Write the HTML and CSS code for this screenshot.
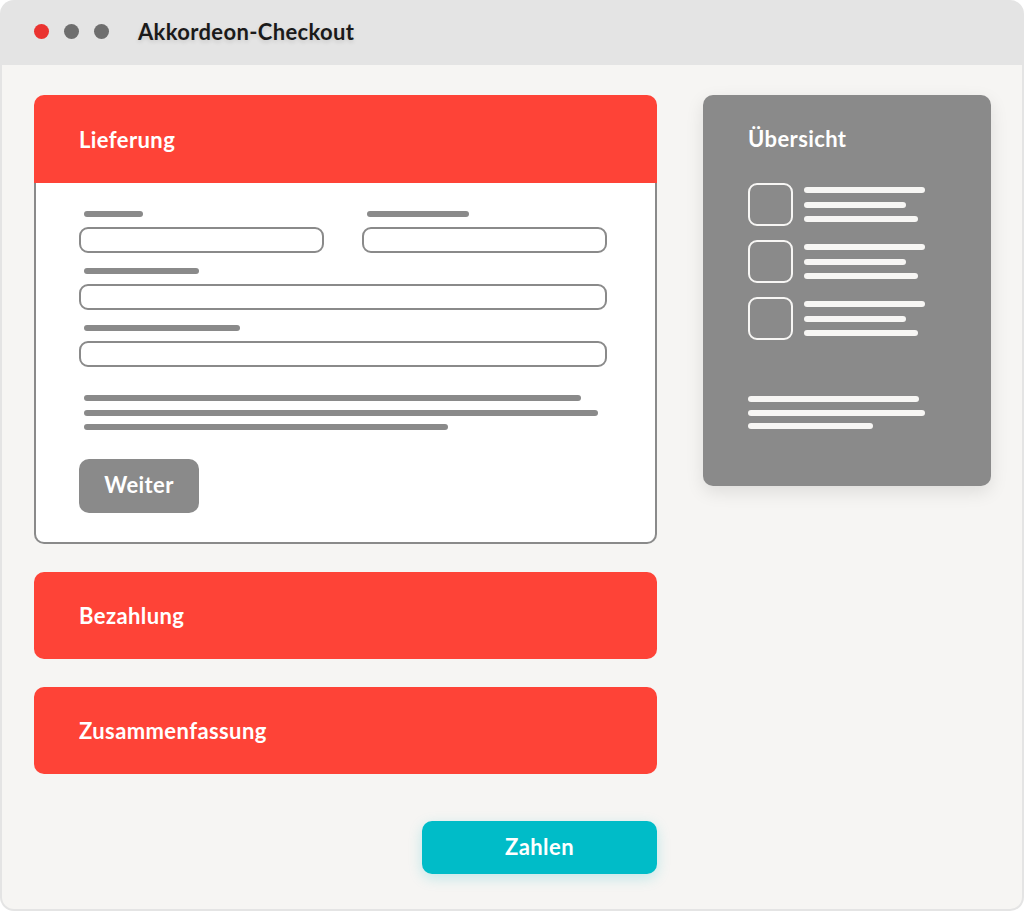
FILE: index.html
```html
<!DOCTYPE html>
<html lang="de">
<head>
<meta charset="utf-8">
<title>Akkordeon-Checkout</title>
<link rel="stylesheet" href="styles.css">
</head>
<body>
<div class="window">
  <header class="titlebar">
    <span class="dot dot-red"></span>
    <span class="dot"></span>
    <span class="dot"></span>
    <h1 class="title">Akkordeon-Checkout</h1>
  </header>
  <main class="content">
    <section class="main-col">
      <div class="acc acc-open">
        <div class="acc-head">Lieferung</div>
        <div class="acc-body">
          <div class="form">
            <div class="field"><span class="label" style="width:59px"></span><span class="input"></span></div>
            <div class="field"><span class="label" style="width:102px"></span><span class="input"></span></div>
            <div class="field span2"><span class="label" style="width:115px"></span><span class="input"></span></div>
            <div class="field span2"><span class="label" style="width:156px"></span><span class="input"></span></div>
          </div>
          <div class="text-lines">
            <span class="line" style="width:497px"></span>
            <span class="line" style="width:514px"></span>
            <span class="line" style="width:364px"></span>
          </div>
          <button class="btn-next">Weiter</button>
        </div>
      </div>
      <div class="acc acc-closed"><div class="acc-head">Bezahlung</div></div>
      <div class="acc acc-closed"><div class="acc-head">Zusammenfassung</div></div>
      <div class="pay-row"><button class="btn-pay">Zahlen</button></div>
    </section>
    <aside class="summary">
      <h2 class="summary-title">Übersicht</h2>
      <ul class="items">
        <li class="item"><span class="box"></span><span class="item-lines"><span class="wline" style="width:121px"></span><span class="wline" style="width:102px"></span><span class="wline" style="width:114px"></span></span></li>
        <li class="item"><span class="box"></span><span class="item-lines"><span class="wline" style="width:121px"></span><span class="wline" style="width:102px"></span><span class="wline" style="width:114px"></span></span></li>
        <li class="item"><span class="box"></span><span class="item-lines"><span class="wline" style="width:121px"></span><span class="wline" style="width:102px"></span><span class="wline" style="width:114px"></span></span></li>
      </ul>
      <div class="totals">
        <span class="wline" style="width:171px"></span>
        <span class="wline" style="width:177px"></span>
        <span class="wline" style="width:125px"></span>
      </div>
    </aside>
  </main>
</div>
</body>
</html>
```

FILE: styles.css
```css
* { box-sizing: border-box; }
html, body { margin: 0; padding: 0; background: #ffffff; }
body { font-family: Lato, "Open Sans", "DejaVu Sans", sans-serif; }

.window {
  width: 1024px;
  height: 911px;
  background: #e4e4e4;
  border-radius: 14px;
  padding: 0 2px 2px 2px;
  display: flex;
  flex-direction: column;
  overflow: hidden;
}

.titlebar {
  height: 65px;
  display: flex;
  align-items: center;
  padding-left: 32px;
  padding-bottom: 3px;
  flex-shrink: 0;
}
.dot {
  width: 15px;
  height: 15px;
  border-radius: 50%;
  background: #6e6e6e;
  margin-right: 15px;
}
.dot-red { background: #ea3330; }
.title {
  margin: 0 0 0 14px;
  font-size: 22px;
  font-weight: 700;
  color: #1a1a1a;
  letter-spacing: 0.35px;
  text-shadow: 0 2px 4px rgba(0,0,0,0.12);
}

.content {
  flex: 1;
  background: #f6f5f3;
  border-radius: 0 0 12px 12px;
  padding: 30px 0 0 32px;
  display: flex;
  align-items: flex-start;
  gap: 46px;
}

.main-col {
  width: 623px;
  display: flex;
  flex-direction: column;
  gap: 28px;
}

.acc-head {
  height: 88px;
  background: #fe4337;
  color: #ffffff;
  font-size: 22px;
  font-weight: 700;
  letter-spacing: 0.4px;
  display: flex;
  align-items: center;
  padding-left: 45px;
  border-radius: 10px;
}
.acc-closed .acc-head { height: 87px; }
.acc-open .acc-head { border-radius: 10px 10px 0 0; }

.acc-body {
  background: #ffffff;
  border: 2px solid #8a8a8a;
  border-top: none;
  border-radius: 0 0 10px 10px;
  padding: 28px 48px 29px 43px;
}

.form {
  display: grid;
  grid-template-columns: 245px 245px;
  column-gap: 38px;
  row-gap: 15px;
}
.span2 { grid-column: 1 / 3; }
.field { display: flex; flex-direction: column; }
.label {
  display: block;
  height: 6px;
  margin-left: 5px;
  margin-bottom: 10px;
  background: #8a8a8a;
  border-radius: 3px;
}
.input {
  display: block;
  height: 26px;
  border: 2px solid #8a8a8a;
  border-radius: 9px;
}

.text-lines {
  display: flex;
  flex-direction: column;
  gap: 8.5px;
  margin: 28px 0 0 5px;
}
.line {
  display: block;
  height: 6px;
  background: #8a8a8a;
  border-radius: 3px;
}

.btn-next {
  margin-top: 29px;
  width: 120px;
  height: 54px;
  border: none;
  border-radius: 10px;
  background: #8a8a8a;
  color: #ffffff;
  font-family: inherit;
  font-size: 22px;
  font-weight: 700;
  letter-spacing: 0.4px;
  display: block;
  padding: 0 0 4px 0;
}

.pay-row {
  display: flex;
  justify-content: flex-end;
  margin-top: 19px;
}
.btn-pay {
  width: 235px;
  height: 53px;
  border: none;
  border-radius: 10px;
  background: #00bcc8;
  color: #ffffff;
  font-family: inherit;
  font-size: 22px;
  font-weight: 700;
  letter-spacing: 0.4px;
  box-shadow: 0 4px 14px rgba(0, 188, 200, 0.22);
  padding: 0 0 3px 0;
}

.summary {
  width: 288px;
  background: #8a8a8a;
  border-radius: 10px;
  padding: 31px 0 57px 45px;
  box-shadow: 0 6px 18px rgba(0,0,0,0.10);
}
.summary-title {
  margin: 0;
  color: #ffffff;
  font-size: 22px;
  font-weight: 700;
  letter-spacing: 0.4px;
  line-height: 26px;
}
.items {
  list-style: none;
  margin: 31px 0 0 0;
  padding: 0;
  display: flex;
  flex-direction: column;
  gap: 14px;
}
.item {
  display: flex;
  align-items: flex-start;
  gap: 11px;
}
.box {
  width: 45px;
  height: 43px;
  border: 2.5px solid #f7f6f4;
  border-radius: 9px;
  flex-shrink: 0;
}
.item-lines {
  display: flex;
  flex-direction: column;
  gap: 8.5px;
  padding-top: 4px;
}
.wline {
  display: block;
  height: 6px;
  background: #f7f6f4;
  border-radius: 3px;
}
.totals {
  display: flex;
  flex-direction: column;
  gap: 7.5px;
  margin-top: 56px;
}
```
